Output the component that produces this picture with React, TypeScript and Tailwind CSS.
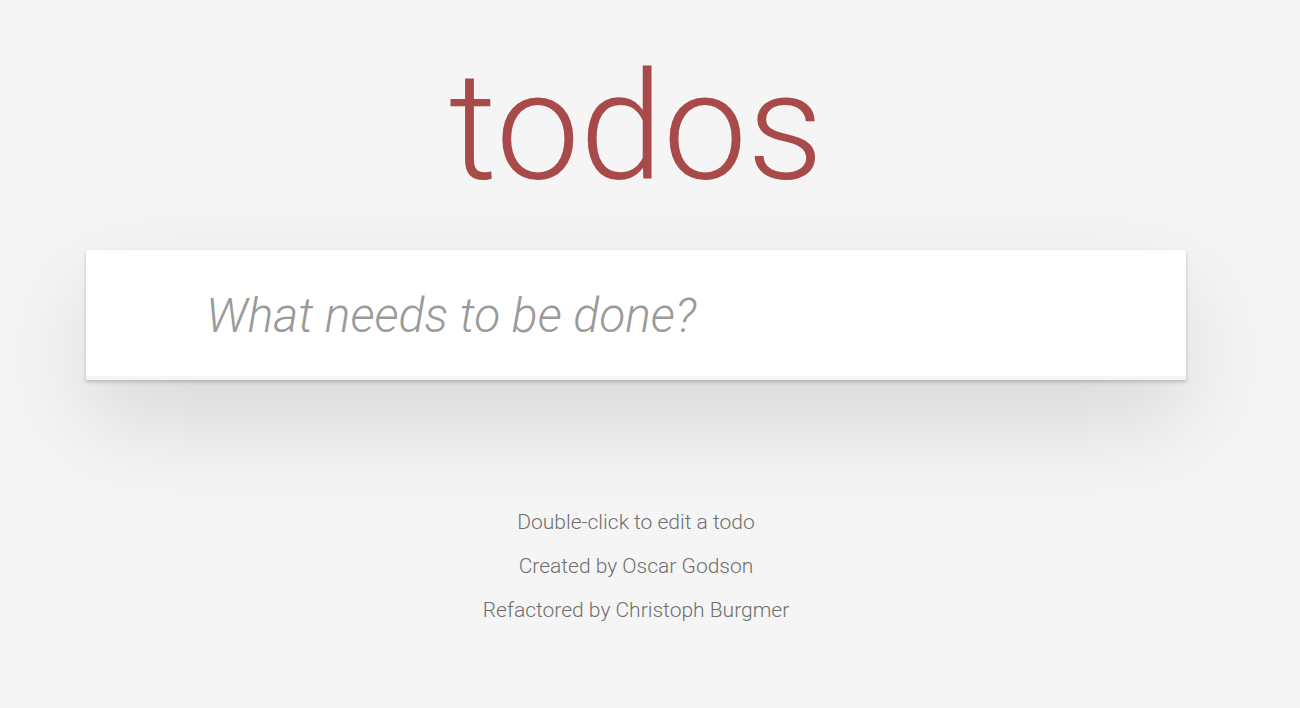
import { useState } from 'react';

export default function App() {
  const [text, setText] = useState('');

  return (
    <div
      className="min-h-screen w-full bg-[#f5f5f5] text-[#4d4d4d]"
      style={{ fontFamily: '"Helvetica Neue", Roboto, "Liberation Sans", sans-serif' }}
    >
      <div className="w-[1272px] flex flex-col items-center">
        {/* Header */}
        <h1 className="mt-[53px] text-[150px] leading-none font-light text-[#a94a4a] select-none">
          todos
        </h1>

        {/* New todo input */}
        <section className="mt-[47px] w-[1100px] bg-white border-b-4 border-[#f5f5f5] shadow-[0_2px_4px_rgba(0,0,0,0.2),0_40px_100px_rgba(0,0,0,0.12)]">
          <input
            value={text}
            onChange={(e) => setText(e.target.value)}
            placeholder="What needs to be done?"
            className="block w-full h-[126px] pt-[4px] pl-[120px] pr-8 bg-transparent outline-none text-[48px] font-light italic text-[#4d4d4d] placeholder:text-[#9a9a9a]"
          />
        </section>

        {/* Info footer */}
        <footer className="mt-[129px] flex flex-col items-center gap-[17px] text-[21px] leading-[27px] font-light text-[#6f6f6f]">
          <p>Double-click to edit a todo</p>
          <p>Created by Oscar Godson</p>
          <p>Refactored by Christoph Burgmer</p>
        </footer>
      </div>
    </div>
  );
}
